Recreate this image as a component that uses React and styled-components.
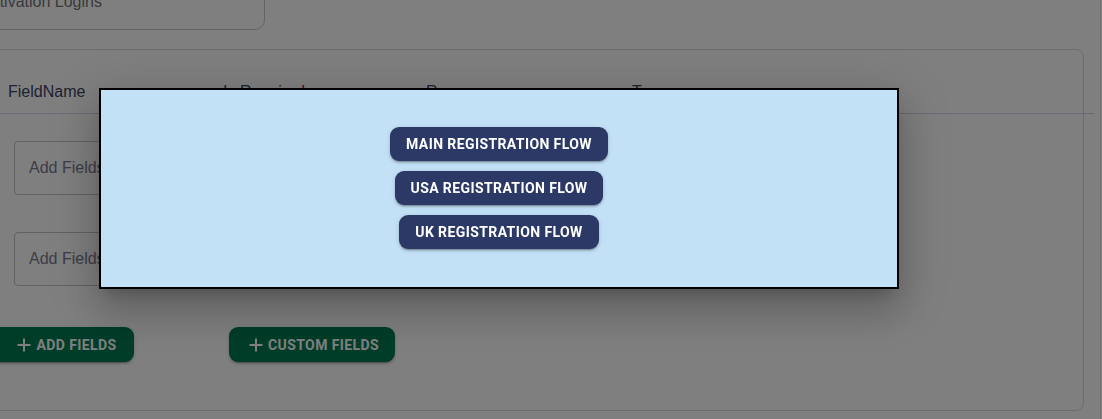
import React from "react";
import styled, { createGlobalStyle } from "styled-components";

const GlobalStyle = createGlobalStyle`
  body {
    margin: 0;
    background: #ffffff;
    font-family: "Liberation Sans", Arial, sans-serif;
    overflow: hidden;
  }
`;

const Page = styled.div`
  width: 1134px;
  margin-left: -34px;
  padding-top: 1px;
  padding-bottom: 20px;
  border-right: 1px solid #dfe5ec;
`;

const TopField = styled.div`
  width: 299px;
  height: 56px;
  margin-top: -27px;
  box-sizing: border-box;
  border: 1px solid #c9c9c9;
  border-radius: 10px;
  padding-left: 14px;
  display: flex;
  align-items: center;
  font-size: 16px;
  color: #747474;
`;

const Card = styled.div`
  margin-top: 19px;
  margin-left: 24px;
  width: 1094px;
  height: 362px;
  box-sizing: border-box;
  border: 1px solid #d2dae4;
  border-radius: 8px;
  padding-top: 20px;
`;

const HeaderRow = styled.div`
  display: grid;
  grid-template-columns: 215px 203px 206px 1fr;
  width: 1102px;
  margin-left: 1px;
  border-bottom: 1px solid #cdd8e6;
`;

const HeaderCell = styled.div`
  padding: 10px 16px 9px 16px;
  font-size: 16px;
  line-height: 24px;
  color: #3d4466;
`;

const FieldRow = styled.div`
  padding-left: 23px;
  margin-top: ${(p) => p.gap}px;
`;

const FieldInput = styled.div`
  width: 260px;
  height: 54px;
  box-sizing: border-box;
  border: 1px solid #c4c4c4;
  border-radius: 4px;
  padding-left: 14px;
  display: flex;
  align-items: center;
  font-size: 16px;
  color: #7a7a8e;
`;

const ActionRow = styled.div`
  display: flex;
  gap: 95px;
  margin-top: 41px;
  margin-left: 1px;
`;

const GreenButton = styled.button`
  display: flex;
  align-items: center;
  justify-content: center;
  gap: 5px;
  width: ${(p) => p.w}px;
  height: 35px;
  border: none;
  border-radius: 9px;
  background: #007a50;
  color: #ffffff;
  font-family: Roboto, "Liberation Sans", sans-serif;
  font-weight: 700;
  font-size: 14px;
  letter-spacing: 0.4px;
  text-transform: uppercase;
  box-shadow: 0 3px 1px -2px rgba(0, 0, 0, 0.2), 0 2px 2px 0 rgba(0, 0, 0, 0.14),
    0 1px 5px 0 rgba(0, 0, 0, 0.12);
  padding: 0 0 0 ${(p) => p.shift}px;
`;

const Backdrop = styled.div`
  position: fixed;
  inset: 0;
  background: rgba(0, 0, 0, 0.5);
`;

const Modal = styled.div`
  position: fixed;
  left: 99px;
  top: 88px;
  width: 800px;
  height: 201px;
  box-sizing: border-box;
  background: #c2e0f6;
  border: 2px solid #000000;
  box-shadow: 0 11px 15px -7px rgba(0, 0, 0, 0.2), 0 24px 38px 3px rgba(0, 0, 0, 0.14),
    0 9px 46px 8px rgba(0, 0, 0, 0.12);
  display: flex;
  flex-direction: column;
  align-items: center;
  gap: 10px;
  padding-top: 37px;
`;

const FlowButton = styled.button`
  height: 34px;
  padding: 0 16px;
  border: none;
  border-radius: 9px;
  background: #2c3966;
  color: #ffffff;
  font-family: Roboto, "Liberation Sans", sans-serif;
  font-weight: 700;
  font-size: 14px;
  letter-spacing: 0.4px;
  text-transform: uppercase;
  box-shadow: 0 3px 1px -2px rgba(0, 0, 0, 0.2), 0 2px 2px 0 rgba(0, 0, 0, 0.14),
    0 1px 5px 0 rgba(0, 0, 0, 0.12);
`;

const Plus = () => (
  <svg width="14" height="14" viewBox="0 0 14 14">
    <path d="M7 0.5v13M0.5 7h13" stroke="currentColor" strokeWidth="2" />
  </svg>
);

const headers = ["FieldName", "Is Required", "Regex", "Type"];
const flows = ["Main Registration Flow", "USA Registration Flow", "UK Registration Flow"];

export default function App() {
  return (
    <>
      <GlobalStyle />
      <Page>
        <TopField>Activation Logins</TopField>
        <Card>
          <HeaderRow>
            {headers.map((h) => (
              <HeaderCell key={h}>{h}</HeaderCell>
            ))}
          </HeaderRow>
          <FieldRow gap={27}>
            <FieldInput>Add Fields</FieldInput>
          </FieldRow>
          <FieldRow gap={37}>
            <FieldInput>Add Fields</FieldInput>
          </FieldRow>
          <ActionRow>
            <GreenButton w={142} shift={8}>
              <Plus />
              Add Fields
            </GreenButton>
            <GreenButton w={166} shift={4}>
              <Plus />
              Custom Fields
            </GreenButton>
          </ActionRow>
        </Card>
      </Page>
      <Backdrop />
      <Modal>
        {flows.map((f) => (
          <FlowButton key={f}>{f}</FlowButton>
        ))}
      </Modal>
    </>
  );
}
